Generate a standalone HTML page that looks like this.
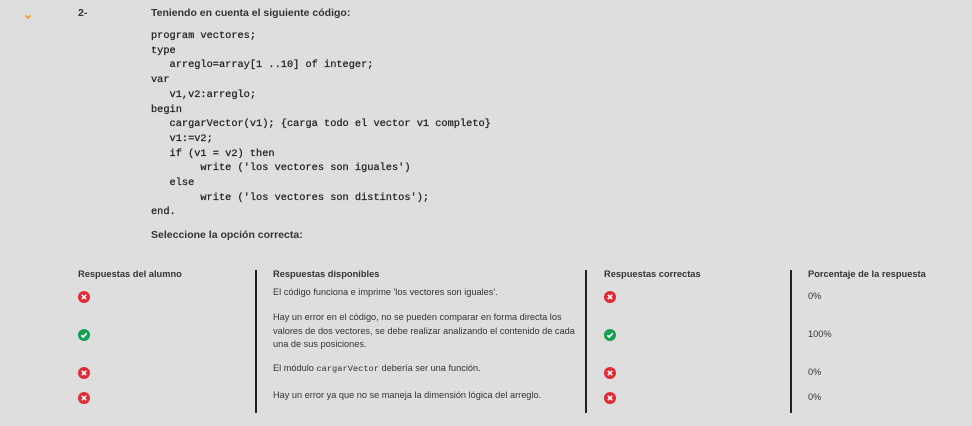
<!DOCTYPE html>
<html><head><meta charset="utf-8"><style>
body{margin:0;width:972px;height:426px;background:#dedede;font-family:"Liberation Sans",sans-serif;color:#333;position:relative;overflow:hidden}
.a{position:absolute;white-space:nowrap}
.b{font-weight:bold;font-size:10.5px}
.h{font-weight:bold;font-size:9.3px}
.t{font-size:9.2px;line-height:13.5px;letter-spacing:0}
pre{position:absolute;left:151px;top:29px;margin:0;font-family:"Liberation Mono",monospace;font-size:10.3px;line-height:14.7px;color:#222;font-weight:normal;-webkit-text-stroke:0.25px #222}
.v{position:absolute;top:270px;width:1.5px;height:143px;background:#222}
.i{position:absolute;width:12px;height:12px}
</style></head><body>
<svg class="a" style="left:23px;top:13px" width="10" height="8" viewBox="0 0 10 8"><path d="M2.5 2.5 L5 5 L7.5 2.5" stroke="#f0a030" stroke-width="1.8" fill="none"/></svg>
<div class="a b" style="left:78px;top:7px">2-</div>
<div class="a b" style="left:151px;top:7px">Teniendo en cuenta el siguiente código:</div>
<pre>program vectores;
type
   arreglo=array[1 ..10] of integer;
var
   v1,v2:arreglo;
begin
   cargarVector(v1); {carga todo el vector v1 completo}
   v1:=v2;
   if (v1 = v2) then
        write ('los vectores son iguales')
   else
        write ('los vectores son distintos');
end.</pre>
<div class="a b" style="left:151px;top:229px">Seleccione la opción correcta:</div>
<div class="v" style="left:255px"></div><div class="v" style="left:585px"></div><div class="v" style="left:790px"></div>
<div class="a h" style="left:78px;top:269px">Respuestas del alumno</div>
<div class="a h" style="left:273px;top:269px">Respuestas disponibles</div>
<div class="a h" style="left:604px;top:269px">Respuestas correctas</div>
<div class="a h" style="left:808px;top:269px">Porcentaje de la respuesta</div>
<div class="a t" style="left:273px;top:286px">El código funciona e imprime 'los vectores son iguales'.</div>
<div class="a t" style="left:273px;top:311px">Hay un error en el código, no se pueden comparar en forma directa los<br>valores de dos vectores, se debe realizar analizando el contenido de cada<br>una de sus posiciones.</div>
<div class="a t" style="left:273px;top:362px">El módulo <span style="font-family:'Liberation Mono',monospace;font-size:8.7px">cargarVector</span> debería ser una función.</div>
<div class="a t" style="left:273px;top:389px">Hay un error ya que no se maneja la dimensión lógica del arreglo.</div>
<div class="a t" style="left:808px;top:290px">0%</div>
<div class="a t" style="left:808px;top:328px">100%</div>
<div class="a t" style="left:808px;top:366px">0%</div>
<div class="a t" style="left:808px;top:391px">0%</div>
<svg width="0" height="0" style="position:absolute"><defs>
<g id="x"><circle cx="6" cy="6" r="6" fill="#e02a35"/><path d="M3.8 3.8L8.2 8.2M8.2 3.8L3.8 8.2" stroke="#fff" stroke-width="1.6"/></g>
<g id="c"><circle cx="6" cy="6" r="6" fill="#14a050"/><path d="M3.3 6.2L5.2 8L8.7 4.3" stroke="#fff" stroke-width="1.7" fill="none"/></g>
</defs></svg>
<svg class="i" style="left:78px;top:291px"><use href="#x"/></svg>
<svg class="i" style="left:78px;top:329px"><use href="#c"/></svg>
<svg class="i" style="left:78px;top:367px"><use href="#x"/></svg>
<svg class="i" style="left:78px;top:392px"><use href="#x"/></svg>
<svg class="i" style="left:604px;top:291px"><use href="#x"/></svg>
<svg class="i" style="left:604px;top:329px"><use href="#c"/></svg>
<svg class="i" style="left:604px;top:367px"><use href="#x"/></svg>
<svg class="i" style="left:604px;top:392px"><use href="#x"/></svg>
</body></html>
